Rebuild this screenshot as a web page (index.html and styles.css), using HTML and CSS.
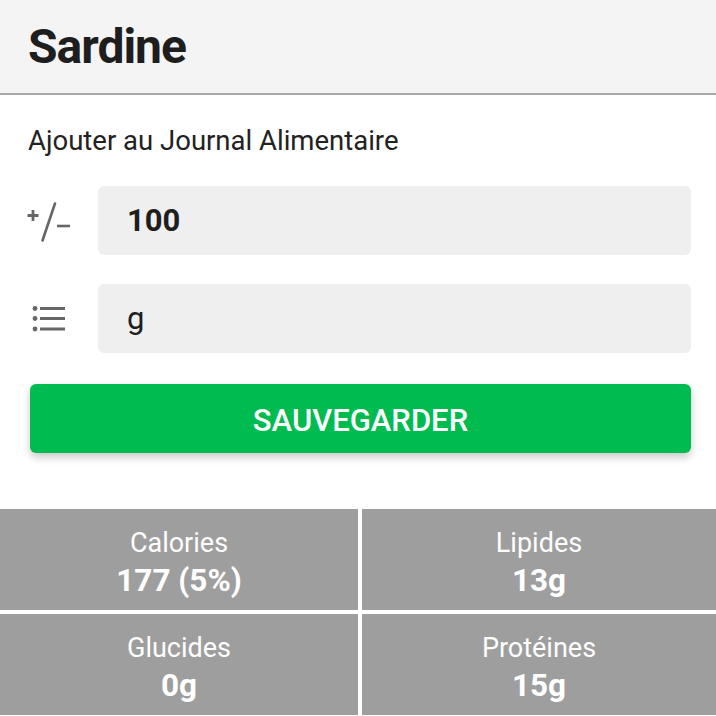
FILE: index.html
```html
<!DOCTYPE html>
<html lang="fr">
<head>
<meta charset="utf-8">
<link rel="stylesheet" href="styles.css">
</head>
<body>
<header class="topbar"><h1 class="title">Sardine</h1></header>
<main class="content">
  <h2 class="section">Ajouter au Journal Alimentaire</h2>
  <div class="row">
    <div class="icon">
      <svg width="48" height="48" viewBox="0 0 48 48">
        <path d="M1.5 18.5h11M7 13v11" stroke="#666" stroke-width="2.8" fill="none"/>
        <path d="M29 6.5L16.5 43.5" stroke="#666" stroke-width="2.6" stroke-linecap="round" fill="none"/>
        <path d="M31 29h13" stroke="#666" stroke-width="2.6" fill="none"/>
      </svg>
    </div>
    <div class="field bold">100</div>
  </div>
  <div class="row">
    <div class="icon">
      <svg width="48" height="40" viewBox="0 0 48 40">
        <circle cx="9" cy="9.5" r="2.4" fill="#666"/>
        <circle cx="9" cy="19.5" r="2.4" fill="#666"/>
        <circle cx="9" cy="30" r="2.4" fill="#666"/>
        <path d="M14 9.5h25M14 19.5h25M14 30h25" stroke="#666" stroke-width="2.8" fill="none"/>
      </svg>
    </div>
    <div class="field">g</div>
  </div>
  <button class="save">SAUVEGARDER</button>
</main>
<section class="grid">
  <div class="cell"><div class="label">Calories</div><div class="value">177 (5%)</div></div>
  <div class="cell"><div class="label">Lipides</div><div class="value">13g</div></div>
  <div class="cell"><div class="label">Glucides</div><div class="value">0g</div></div>
  <div class="cell"><div class="label">Protéines</div><div class="value">15g</div></div>
</section>
</body>
</html>
```
FILE: styles.css
```css
* { box-sizing: border-box; }
html, body { margin: 0; padding: 0; background: #fff; }
body { font-family: Roboto, "Noto Sans", sans-serif; color: #212121; width: 716px; height: 716px; overflow: hidden; }
.topbar { height: 95px; background: #f4f4f4; border-bottom: 2px solid #a8a8a8; display: flex; align-items: center; padding-left: 28px; }
.title { margin: 0; font-size: 48px; font-weight: 700; letter-spacing: -1px; color: #1e1e1e; }
.content { padding: 30px 25px 0 30px; }
.section { margin: 0 0 29px -2px; font-size: 27.5px; font-weight: 400; color: #222; line-height: 32px; }
.row { display: flex; align-items: center; margin-bottom: 29px; }
.row + .row { margin-bottom: 31px; }
.icon { width: 72px; display: flex; align-items: center; justify-content: flex-start; margin-left: -4px; }
.field { flex: 1; height: 69px; background: #efefef; border-radius: 6px; display: flex; align-items: center; padding-left: 29px; font-size: 31px; color: #1e1e1e; }
.field.bold { font-weight: 700; }
.save { display: block; width: 100%; height: 69px; margin-top: 0; border: none; border-radius: 6px; background: #00bb4f; color: #fff; font-family: Roboto, sans-serif; font-size: 31px; font-weight: 500; padding-top: 4px; box-shadow: 0 4px 8px rgba(0,0,0,0.22); }
.grid { margin-top: 56px; display: grid; grid-template-columns: 358px 1fr; grid-auto-rows: 101px; gap: 4px; }
.cell { background: #9e9e9e; color: #fff; display: flex; flex-direction: column; align-items: center; justify-content: center; padding-top: 4px; }
.label { font-size: 27px; line-height: 38px; }
.value { font-size: 31.5px; font-weight: 700; line-height: 38px; }
```
